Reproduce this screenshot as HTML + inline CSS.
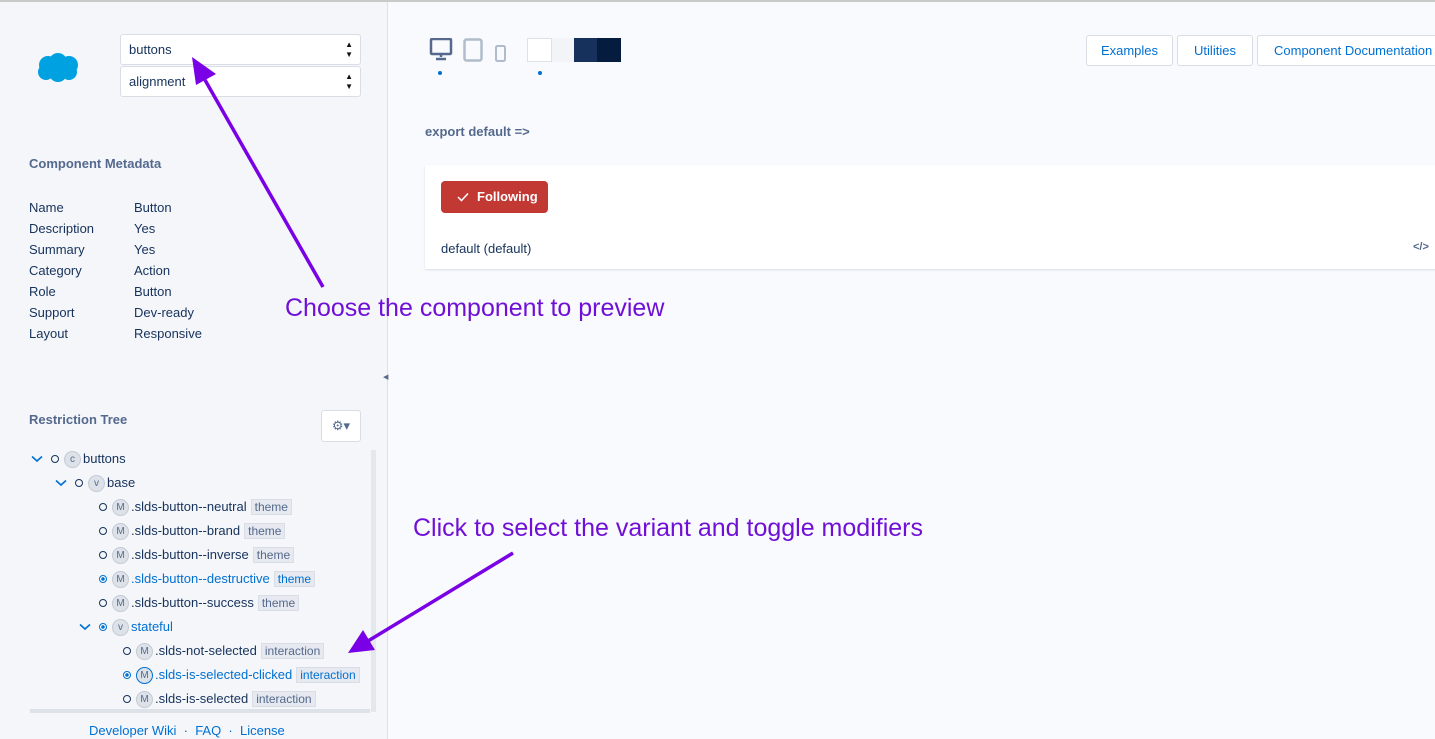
<!DOCTYPE html>
<html><head><meta charset="utf-8"><style>
*{box-sizing:border-box;margin:0;padding:0}
body{width:1435px;height:739px;overflow:hidden;font-family:"Liberation Sans",sans-serif;font-size:13px;color:#16325c;background:#f9fafd;position:relative}
.abs{position:absolute}
#left{left:0;top:2px;width:388px;height:737px;background:#f4f6fa;border-right:1px solid #dde1e8}
.sel{position:absolute;left:120px;width:241px;height:31px;background:#fff;border:1px solid #d8dde6;border-radius:3px;padding:7px 8px;font-size:13px}
.sel i{position:absolute;right:7px;top:5px;font-style:normal;font-size:8px;line-height:10px;color:#111}
h3{position:absolute;left:29px;font-size:13px;font-weight:bold;color:#54698d}
.meta{position:absolute;left:29px;line-height:21px}
.meta div span{display:inline-block;width:105px}
.row{position:absolute;height:20px;line-height:20px;white-space:nowrap;font-size:13px;display:flex;align-items:center}
.o{display:inline-block;width:8px;height:8px;border:1.3px solid #16325c;border-radius:50%;margin-right:5px}
.o.on{border-color:#0070d2;background:radial-gradient(#0070d2 40%,#fff 45%)}
.b{display:inline-block;width:17px;height:17px;border-radius:50%;background:#dde1e8;border:1px solid #c5cbd5;font-size:10px;text-align:center;line-height:15px;color:#54698d;margin-right:2px}
.t{display:inline-block;background:#e6e9ef;border:1px solid #d8dde6;color:#54698d;font-size:12px;line-height:14px;padding:0 3px;margin-left:4px}
.blue{color:#0070d2}.blue .t{color:#0070d2}
.chev{position:absolute}
.btn{position:absolute;top:35px;height:31px;background:#fff;border:1px solid #d8dde6;border-radius:3px;color:#0070d2;font-size:13px;line-height:29px;text-align:center}
.note{position:absolute;color:#7010d6;font-size:25px}
</style></head><body>
<div class="abs" style="left:0;top:0;width:1435px;height:2px;background:#c9c9c9"></div>
<div id="left" class="abs">
 <svg class="abs" style="left:36px;top:50px" width="44" height="32" viewBox="0 0 44 32"><g fill="#00a1e0"><circle cx="12" cy="13" r="9"/><circle cx="22" cy="10" r="9"/><circle cx="33" cy="13" r="9"/><circle cx="10" cy="20" r="8"/><circle cx="22" cy="21" r="9"/><circle cx="33" cy="20" r="8"/></g></svg>
 <div class="sel" style="top:32px">buttons<i>▲<br>▼</i></div>
 <div class="sel" style="top:64px">alignment<i>▲<br>▼</i></div>
 <h3 style="top:154px">Component Metadata</h3>
 <div class="meta" style="top:195px">
  <div><span>Name</span>Button</div><div><span>Description</span>Yes</div><div><span>Summary</span>Yes</div><div><span>Category</span>Action</div><div><span>Role</span>Button</div><div><span>Support</span>Dev-ready</div><div><span>Layout</span>Responsive</div>
 </div>
 <h3 style="top:410px">Restriction Tree</h3>
 <div class="abs" style="left:321px;top:408px;width:40px;height:32px;background:#fff;border:1px solid #d8dde6;border-radius:3px;text-align:center;line-height:30px;color:#54698d;font-size:13px">⚙▾</div>
 <div class="abs" style="left:371px;top:448px;width:5px;height:262px;background:#e4e7ec"></div>
 <div class="abs" style="left:30px;top:707px;width:340px;height:4px;background:#dde1e8"></div>
 <div class="abs" style="left:383px;top:371px;font-size:7px;color:#54698d">◀</div>
 <svg class="chev" style="left:31px;top:453px" width="12" height="8"><path d="M1 1.5l5 4.5 5-4.5" fill="none" stroke="#0070d2" stroke-width="1.6"/></svg>
 <div class="row" style="left:51px;top:447px"><span class="o"></span><span class="b">c</span>buttons</div>
 <svg class="chev" style="left:55px;top:477px" width="12" height="8"><path d="M1 1.5l5 4.5 5-4.5" fill="none" stroke="#0070d2" stroke-width="1.6"/></svg>
 <div class="row" style="left:75px;top:471px"><span class="o"></span><span class="b">v</span>base</div>
 <div class="row" style="left:99px;top:495px"><span class="o"></span><span class="b">M</span>.slds-button--neutral<span class="t">theme</span></div>
 <div class="row" style="left:99px;top:519px"><span class="o"></span><span class="b">M</span>.slds-button--brand<span class="t">theme</span></div>
 <div class="row" style="left:99px;top:543px"><span class="o"></span><span class="b">M</span>.slds-button--inverse<span class="t">theme</span></div>
 <div class="row blue" style="left:99px;top:567px"><span class="o on"></span><span class="b">M</span>.slds-button--destructive<span class="t">theme</span></div>
 <div class="row" style="left:99px;top:591px"><span class="o"></span><span class="b">M</span>.slds-button--success<span class="t">theme</span></div>
 <svg class="chev" style="left:79px;top:621px" width="12" height="8"><path d="M1 1.5l5 4.5 5-4.5" fill="none" stroke="#0070d2" stroke-width="1.6"/></svg>
 <div class="row blue" style="left:99px;top:615px"><span class="o on"></span><span class="b">v</span>stateful</div>
 <div class="row" style="left:123px;top:639px"><span class="o"></span><span class="b">M</span>.slds-not-selected<span class="t">interaction</span></div>
 <div class="row blue" style="left:123px;top:663px"><span class="o on"></span><span class="b" style="border-color:#0070d2">M</span>.slds-is-selected-clicked<span class="t">interaction</span></div>
 <div class="row" style="left:123px;top:687px"><span class="o"></span><span class="b">M</span>.slds-is-selected<span class="t">interaction</span></div>
 <div class="abs" style="left:89px;top:721px;color:#0070d2">Developer Wiki &nbsp;·&nbsp; FAQ &nbsp;·&nbsp; License</div>
</div>
<svg class="abs" style="left:429px;top:38px" width="26" height="24" viewBox="0 0 26 24"><rect x="2" y="1" width="20" height="15" rx="1" fill="none" stroke="#54698d" stroke-width="2.5"/><path d="M12 16v3M7 21h10" stroke="#54698d" stroke-width="2.5"/></svg>
<svg class="abs" style="left:463px;top:38px" width="20" height="24"><rect x="1.5" y="1.5" width="17" height="21" rx="2" fill="none" stroke="#b0bbcb" stroke-width="2.5"/></svg>
<svg class="abs" style="left:495px;top:45px" width="12" height="17"><rect x="1" y="1" width="9" height="15" rx="1.5" fill="none" stroke="#b0bbcb" stroke-width="2"/></svg>
<div class="abs" style="left:438px;top:71px;width:4px;height:4px;border-radius:50%;background:#0070d2"></div>
<div class="abs" style="left:538px;top:71px;width:4px;height:4px;border-radius:50%;background:#0070d2"></div>
<div class="abs" style="left:527px;top:38px;width:25px;height:24px;background:#fff;border:1px solid #dde1e8"></div>
<div class="abs" style="left:552px;top:38px;width:22px;height:24px;background:#f2f4f7"></div>
<div class="abs" style="left:574px;top:38px;width:23px;height:24px;background:#16325c"></div>
<div class="abs" style="left:597px;top:38px;width:24px;height:24px;background:#061c3f"></div>
<div class="btn" style="left:1086px;width:87px">Examples</div>
<div class="btn" style="left:1177px;width:76px">Utilities</div>
<div class="btn" style="left:1257px;width:190px;text-align:left;padding-left:16px">Component Documentation</div>
<div class="abs" style="left:425px;top:124px;font-weight:bold;color:#54698d">export default =&gt;</div>
<div class="abs" style="left:425px;top:165px;width:1015px;height:104px;background:#fff;box-shadow:0 1px 2px #d8dde6"></div>
<div class="abs" style="left:441px;top:181px;width:107px;height:32px;background:#c23934;border-radius:4px;color:#fff;font-weight:bold;font-size:13px;line-height:32px;padding-left:36px">Following</div>
<svg class="abs" style="left:457px;top:192px" width="12" height="10"><path d="M1 5l3.5 3.5L11 1.5" fill="none" stroke="#fff" stroke-width="1.5"/></svg>
<div class="abs" style="left:441px;top:241px">default (default)</div>
<div class="abs" style="left:1413px;top:241px;font-size:11px;font-weight:bold;color:#54698d">&lt;/&gt;</div>
<div class="note" style="left:285px;top:294px">Choose the component to preview</div>
<div class="note" style="left:413px;top:514px">Click to select the variant and toggle modifiers</div>
<svg class="abs" style="left:0;top:0" width="1435" height="739">
<g stroke="#7a00e6" stroke-width="3.5" fill="#7a00e6">
<line x1="323" y1="287" x2="205" y2="80"/>
<polygon points="192,57 216,74 196,85" stroke="none"/>
<line x1="513" y1="553" x2="368" y2="641"/>
<polygon points="348,653 363,630 375,650" stroke="none"/>
</g></svg>
</body></html>
